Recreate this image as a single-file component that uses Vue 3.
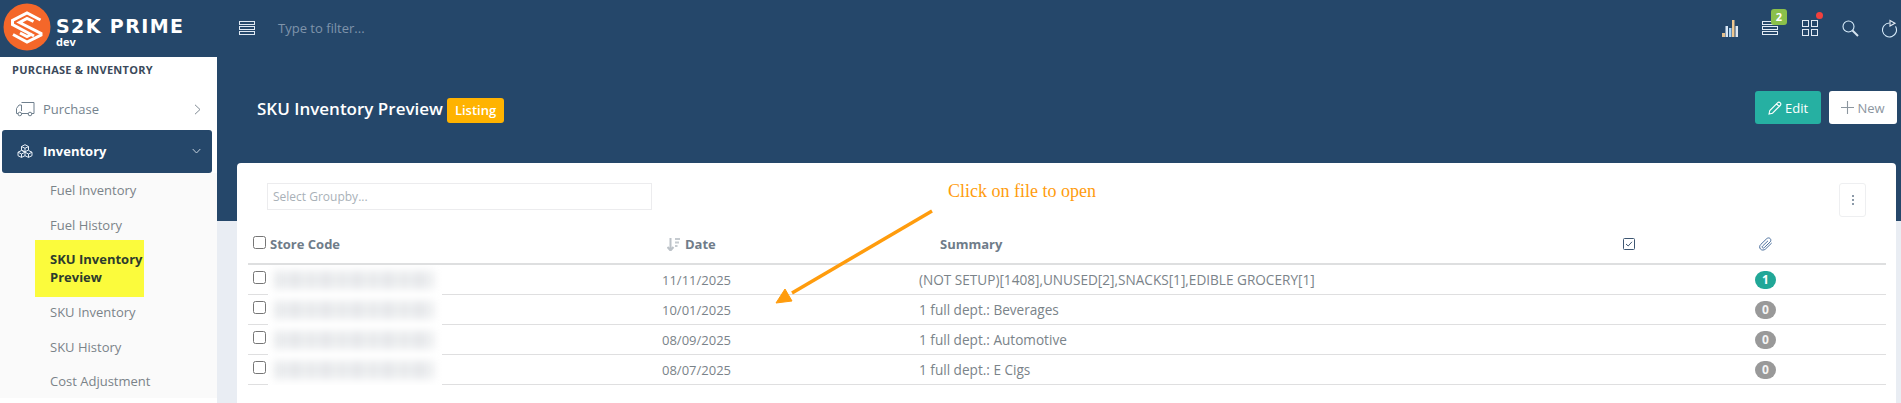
<template>
  <div class="page">
    <!-- top bar -->
    <header class="topbar">
      <div class="brand">
        <svg class="logo" width="48" height="48" viewBox="0 0 48 48">
          <circle cx="24" cy="24" r="23.5" fill="#f4672a" />
          <g fill="none" stroke="#fff" stroke-width="3" stroke-linejoin="miter">
            <path d="M37.500 17 24 10 9.500 17.500 9.500 21.500 31 33" />
            <path d="M30.500 18.500 24 15.500 16.500 19.500 38 30.500 38 32 24 39 10 31.500" />
            <path d="M17 30 24 33.500 29 31" />
          </g>
        </svg>
        <div class="brand-text">
          <div class="brand-name">S2K PRIME</div>
          <div class="brand-env">dev</div>
        </div>
      </div>
      <svg class="list-icon" width="17" height="15" viewBox="0 0 17 15">
        <g fill="none" stroke="#dfe8f2" stroke-width="1">
          <rect x=".5" y=".5" width="15" height="3" />
          <rect x=".5" y="5.500" width="15" height="3" />
          <rect x=".5" y="10.500" width="15" height="3" />
        </g>
      </svg>
      <div class="filter">Type to filter...</div>
      <div class="top-icons">
        <svg width="17" height="17" viewBox="0 0 17 17">
          <rect x="0" y="13" width="3" height="4" fill="#e3c08e" />
          <rect x="3.500" y="6" width="2.500" height="11" fill="#dbe8f5" />
          <rect x="7" y="8" width="2.500" height="9" fill="#a9d2f2" />
          <rect x="10" y="0" width="2.500" height="17" fill="#f0c890" />
          <rect x="13.500" y="6" width="2.500" height="11" fill="#dfe6ee" />
        </svg>
        <span class="top-icon">
          <svg width="17" height="15" viewBox="0 0 17 15">
            <g fill="none" stroke="#e3ebf4" stroke-width="1">
              <rect x=".5" y=".5" width="15" height="3" />
              <rect x=".5" y="5.500" width="15" height="3" />
              <rect x=".5" y="10.500" width="15" height="3" />
            </g>
          </svg>
          <span class="count">2</span>
        </span>
        <span class="top-icon">
          <svg width="17" height="16" viewBox="0 0 17 16">
            <g fill="none" stroke="#e3ebf4" stroke-width="1">
              <rect x=".5" y=".5" width="6" height="6" />
              <rect x="9.500" y=".5" width="6" height="6" />
              <rect x=".5" y="9.500" width="6" height="6" />
              <rect x="9.500" y="9.500" width="6" height="6" />
            </g>
          </svg>
          <span class="dot"></span>
        </span>
        <svg width="17" height="17" viewBox="0 0 17 17">
          <circle cx="6.500" cy="6.500" r="5.500" fill="none" stroke="#d6ebfa" stroke-width="1.100" />
          <path d="M10.500 10.500 16 16" stroke="#d6e4f0" stroke-width="2" />
        </svg>
        <svg width="16" height="19" viewBox="0 0 16 19">
          <path d="M7.500 4A7 7 0 1 0 13.500 7.400" fill="none" stroke="#d6ebfa" stroke-width="1.100" />
          <path d="M8 1.500 13 4.200 8 7Z" fill="none" stroke="#e3ebf4" stroke-width="1.100" />
        </svg>
      </div>
    </header>

    <div class="body">
      <!-- sidebar -->
      <aside class="sidebar">
        <div class="section-title">PURCHASE &amp; INVENTORY</div>
        <div class="nav-row">
          <svg width="20" height="16" viewBox="0 0 20 16">
            <g fill="none" stroke="#6f7f8d" stroke-width="1">
              <path d="M6.500 12.500H13M6.500 1.500H19V12.500H17M3 12.500H1.500V7.500L4 4H6.500V10" />
              <circle cx="4.800" cy="13" r="1.800" />
              <circle cx="15" cy="13" r="1.800" />
            </g>
          </svg>
          <span>Purchase</span>
          <svg class="chev" width="7" height="11" viewBox="0 0 7 11">
            <path d="M1 .8 6 5.500 1 10.200" fill="none" stroke="#808b94" stroke-width="1" />
          </svg>
        </div>
        <div class="nav-row active">
          <svg width="16" height="14" viewBox="0 0 16 14">
            <g fill="none" stroke="#e6edf5" stroke-width="1">
              <path d="M8 .7 11.500 2.500V6L8 7.800 4.500 6V2.500ZM4.500 2.500 8 4.300 11.500 2.500M8 4.300V7.800" />
              <path d="M4.500 6.500 8 8.200V11.700L4.500 13.400 1 11.700V8.200ZM1 8.200 4.500 10 8 8.200M4.500 10V13.400" />
              <path d="M11.500 6.500 15 8.200V11.700L11.500 13.400 8 11.700M8 8.200 11.500 10 15 8.200M11.500 10V13.400" />
            </g>
          </svg>
          <span>Inventory</span>
          <svg class="chev" width="9" height="6" viewBox="0 0 9 6">
            <path d="M.7 1 4.500 5 8.300 1" fill="none" stroke="#c4d0dc" stroke-width="1" />
          </svg>
        </div>
        <ul class="sub-nav">
          <li v-for="item in subItems" :key="item.label" :class="{ current: item.current }">
            <span>{{ item.label }}</span>
          </li>
        </ul>
      </aside>

      <!-- main -->
      <main class="content">
        <div class="page-head">
          <h1>SKU Inventory Preview</h1>
          <span class="tag">Listing</span>
          <button class="btn edit">
            <svg width="14" height="14" viewBox="0 0 14 14">
              <path d="M1 13 1.800 9.500 9.500 1.800C10.300 1 11.500 1 12.300 1.800 13 2.600 13 3.700 12.200 4.500L4.500 12.200ZM8.500 2.800 11.200 5.500" fill="none" stroke="#fff" stroke-width="1.100" />
            </svg>
            Edit
          </button>
          <button class="btn new">
            <svg width="13" height="13" viewBox="0 0 13 13">
              <path d="M6.500 0V13M0 6.500H13" stroke="#8c969f" stroke-width="1.100" />
            </svg>
            New
          </button>
        </div>

        <section class="card">
          <div class="toolbar">
            <div class="groupby">Select Groupby...</div>
            <button class="more" aria-label="More">
              <i></i><i></i><i></i>
            </button>
          </div>

          <div class="grid head-row">
            <div class="store-head"><input type="checkbox" /><b>Store Code</b></div>
            <div class="date-head">
              <svg width="13" height="13" viewBox="0 0 13 13">
                <path d="M3.500 0V12M.5 9 3.500 12.500 6.500 9" fill="none" stroke="#bcc2c8" stroke-width="2" />
                <path d="M8 1H13M8 4.500H12M8 8H10.500" stroke="#c6cbd0" stroke-width="2" />
              </svg>
              <b>Date</b>
            </div>
            <div class="summary-head"><b>Summary</b></div>
            <div class="center">
              <svg width="12" height="12" viewBox="0 0 12 12">
                <rect x=".5" y=".5" width="11" height="11" rx="1" fill="none" stroke="#3d5672" />
                <path d="M3 6 5.200 8 9 3.800" fill="none" stroke="#3d5672" />
              </svg>
            </div>
            <div class="center">
              <svg width="14" height="14" viewBox="0 0 14 14">
                <path d="M12.700 6 6.500 12C5 13.400 2.700 13.400 1.500 12.100.3 10.800.4 8.800 1.700 7.500L7.800 1.600C8.800.7 10.300.7 11.200 1.600 12.100 2.600 12 4 11.100 5L5.200 10.700C4.700 11.200 3.900 11.200 3.500 10.700 3 10.200 3.100 9.500 3.600 9L9 3.800" fill="none" stroke="#4c6f9c" stroke-width="1" />
              </svg>
            </div>
          </div>

          <div v-for="row in rows" :key="row.date" class="grid row">
            <div class="store-cell">
              <input type="checkbox" />
              <div class="redacted"><div class="smear"></div></div>
            </div>
            <div>{{ row.date }}</div>
            <div class="summary">{{ row.summary }}</div>
            <div></div>
            <div class="center">
              <span class="pill" :class="{ some: row.files > 0 }">{{ row.files }}</span>
            </div>
          </div>
        </section>
      </main>
    </div>

    <!-- callout drawn over the table -->
    <div class="note">Click on file to open</div>
    <svg class="note-arrow" width="170" height="100" viewBox="0 0 170 100">
      <path d="M162 5 22 87" stroke="#ff9c0d" stroke-width="3.500" fill="none" />
      <path d="M6 97 15 83 22 95Z" fill="#ff9c0d" stroke="#ff9c0d" stroke-width="1" />
    </svg>
  </div>
</template>

<script setup>
const subItems = [
  { label: 'Fuel Inventory' },
  { label: 'Fuel History' },
  { label: 'SKU Inventory Preview', current: true },
  { label: 'SKU Inventory' },
  { label: 'SKU History' },
  { label: 'Cost Adjustment' },
]

const rows = [
  { date: '11/11/2025', summary: '(NOT SETUP)[1408],UNUSED[2],SNACKS[1],EDIBLE GROCERY[1]', files: 1 },
  { date: '10/01/2025', summary: '1 full dept.: Beverages', files: 0 },
  { date: '08/09/2025', summary: '1 full dept.: Automotive', files: 0 },
  { date: '08/07/2025', summary: '1 full dept.: E Cigs', files: 0 },
]
</script>

<style>
html,
body {
  margin: 0;
  overflow: hidden;
}
</style>

<style scoped>
.page {
  position: relative;
  width: 100vw;
  height: 100vh;
  overflow: hidden;
  display: flex;
  flex-direction: column;
  font-family: "Open Sans", "Liberation Sans", sans-serif;
  font-size: 13px;
  color: #7a8389;
  background: #fff;
}

/* top bar */
.topbar {
  flex: 0 0 57px;
  display: flex;
  align-items: center;
  background: #25476a;
}
.brand {
  display: flex;
  width: 239px;
  padding-left: 3px;
  box-sizing: border-box;
  align-items: center;
  align-self: flex-start;
  padding-top: 3px;
}
.logo {
  flex: none;
}
.brand-text {
  margin-left: 5px;
  color: #fff;
}
.brand-name {
  font-family: "DejaVu Sans", sans-serif;
  font-weight: 700;
  font-size: 19px;
  line-height: 20px;
  letter-spacing: 1.400px;
  white-space: nowrap;
  margin-top: 10px;
}
.brand-env {
  font-weight: 700;
  font-size: 11px;
  line-height: 12px;
}
.list-icon {
  flex: none;
  margin-bottom: 1px;
}
.filter {
  margin-left: 22px;
  color: #7f94aa;
  flex: 1;
  margin-bottom: 1px;
}
.top-icons {
  display: flex;
  align-items: center;
  gap: 23px;
  width: 179px;
  flex: none;
  padding-bottom: 1px;
}
.top-icon {
  position: relative;
  display: flex;
}
.count {
  position: absolute;
  left: 9px;
  top: -12px;
  width: 16px;
  height: 16px;
  border-radius: 3px;
  background: #8bc04a;
  color: #fff;
  font-size: 11px;
  font-weight: 700;
  line-height: 16px;
  text-align: center;
}
.dot {
  position: absolute;
  right: -4px;
  top: -8px;
  width: 7px;
  height: 7px;
  border-radius: 50%;
  background: #f2403d;
}

.body {
  flex: 1;
  display: flex;
  min-height: 0;
}

/* sidebar */
.sidebar {
  flex: 0 0 217px;
  background: #fff;
}
.section-title {
  height: 33px;
  padding: 5px 0 0 12px;
  box-sizing: border-box;
  font-size: 11px;
  line-height: 15px;
  font-weight: 700;
  color: #3b4a5b;
  letter-spacing: .25px;
}
.nav-row {
  display: flex;
  align-items: center;
  height: 40px;
  margin: 0 5px 0 2px;
  padding: 0 11px 2px 13px;
  box-sizing: border-box;
  color: #75838e;
  border-radius: 3px;
}
.nav-row svg:first-child {
  flex: none;
  width: 20px;
}
.nav-row span {
  margin-left: 8px;
  flex: 1;
}
.nav-row.active {
  height: 43px;
  background: #25476a;
  color: #fff;
  font-weight: 700;
}
.sub-nav {
  list-style: none;
  margin: 0;
  padding: 0;
  height: 225px;
  background: #fafafa;
}
.sub-nav li {
  height: 34.500px;
  line-height: 34.500px;
  padding-left: 50px;
}
.sub-nav li.current {
  height: 57px;
  margin: -2.500px 0 -1.500px 35px;
  width: 109px;
  padding: 0 0 0 15px;
  box-sizing: border-box;
  display: flex;
  align-items: center;
  background: #fbfb3c;
  color: #2d3b2d;
  font-weight: 700;
  line-height: 18px;
}

/* main */
.content {
  flex: 1;
  min-width: 0;
  padding-left: 20px;
  background: linear-gradient(#25476a 164px, #e9edf3 164px);
}
.page-head {
  height: 106px;
  display: flex;
  align-items: flex-start;
  padding: 34px 4px 0 20px;
  box-sizing: border-box;
}
h1 {
  margin: 8px 4px 0 0;
  font-size: 17px;
  line-height: 20px;
  font-weight: 600;
  color: #fff;
  white-space: nowrap;
}
.tag {
  margin: 7px auto 0 0;
  height: 25px;
  line-height: 25px;
  padding: 0 8px;
  border-radius: 3px;
  background: #ffb300;
  color: #fff;
  font-weight: 600;
}
.btn {
  display: flex;
  align-items: center;
  justify-content: center;
  gap: 3px;
  height: 33px;
  border: 0;
  border-radius: 3px;
  padding: 0;
  font: inherit;
}
.edit {
  width: 66px;
  background: #26b0a2;
  color: #fff;
}
.new {
  width: 68px;
  margin-left: 8px;
  background: #fff;
  color: #8c969f;
}

.card {
  height: 240px;
  margin-right: 5px;
  padding: 20px 10px 0 11px;
  background: #fff;
  border-radius: 4px 4px 0 0;
}
.toolbar {
  display: flex;
  justify-content: space-between;
  align-items: flex-start;
  height: 34px;
  padding: 0 20px 0 19px;
}
.groupby {
  width: 385px;
  height: 27px;
  box-sizing: border-box;
  border: 1px solid #ececee;
  padding-left: 5px;
  line-height: 25px;
  color: #a9b1b8;
  font-size: 12px;
}
.more {
  width: 27px;
  height: 34px;
  box-sizing: border-box;
  background: #fff;
  border: 1px solid #eeeff1;
  border-radius: 3px;
  padding: 0;
  display: flex;
  flex-direction: column;
  align-items: center;
  justify-content: center;
  gap: 2px;
}
.more i {
  width: 2px;
  height: 2px;
  background: #66788c;
  border-radius: 50%;
}

.grid {
  display: grid;
  grid-template-columns: 414px 257px 641px 137px 137px 1fr;
  align-items: center;
}
.head-row {
  height: 48px;
  box-sizing: border-box;
  border-bottom: 2px solid #dedfe0;
  padding-top: 8px;
}
.head-row b {
  font-weight: 700;
  color: #6f7c89;
}
input[type="checkbox"] {
  flex: none;
  width: 13px;
  height: 13px;
  margin: 0;
}
.store-head {
  display: flex;
  align-items: center;
  gap: 4px;
  padding-left: 5px;
}
.store-head input {
  margin-bottom: 3px;
}
.date-head {
  display: flex;
  align-items: center;
  gap: 5px;
  padding-left: 5px;
}
.summary-head {
  padding-left: 21px;
}
.center {
  display: flex;
  justify-content: center;
}
.row {
  height: 30px;
  box-sizing: border-box;
  border-bottom: 1px solid #dfdfe0;
}
.summary {
  font-size: 13.600px;
  padding-bottom: 2px;
}
.store-cell {
  display: flex;
  align-items: flex-start;
  align-self: start;
  padding-left: 5px;
  gap: 2px;
  height: 30px;
}
.store-cell input {
  margin-top: 6px;
}
.redacted {
  width: 174px;
  height: 30px;
  background: #fff;
  overflow: hidden;
}
.smear {
  width: 160px;
  height: 18px;
  margin: 6px 0 0 6px;
  background: repeating-linear-gradient(90deg, #e8eaec 0 12px, #f1f2f4 12px 16px, #e4e6e9 16px 27px, #f3f4f5 27px 31px);
  filter: blur(4px);
}
.pill {
  width: 21px;
  height: 18px;
  border-radius: 9px;
  background: #999;
  color: #f4f4f4;
  font-size: 12px;
  font-weight: 700;
  line-height: 18px;
  text-align: center;
}
.pill.some {
  background: #21a797;
  color: #fff;
}

/* callout */
.note {
  position: absolute;
  left: 948px;
  top: 181px;
  font-family: "Liberation Serif", serif;
  font-size: 18px;
  line-height: 20px;
  color: #ff9c0d;
  white-space: nowrap;
}
.note-arrow {
  position: absolute;
  left: 770px;
  top: 206px;
}
</style>
